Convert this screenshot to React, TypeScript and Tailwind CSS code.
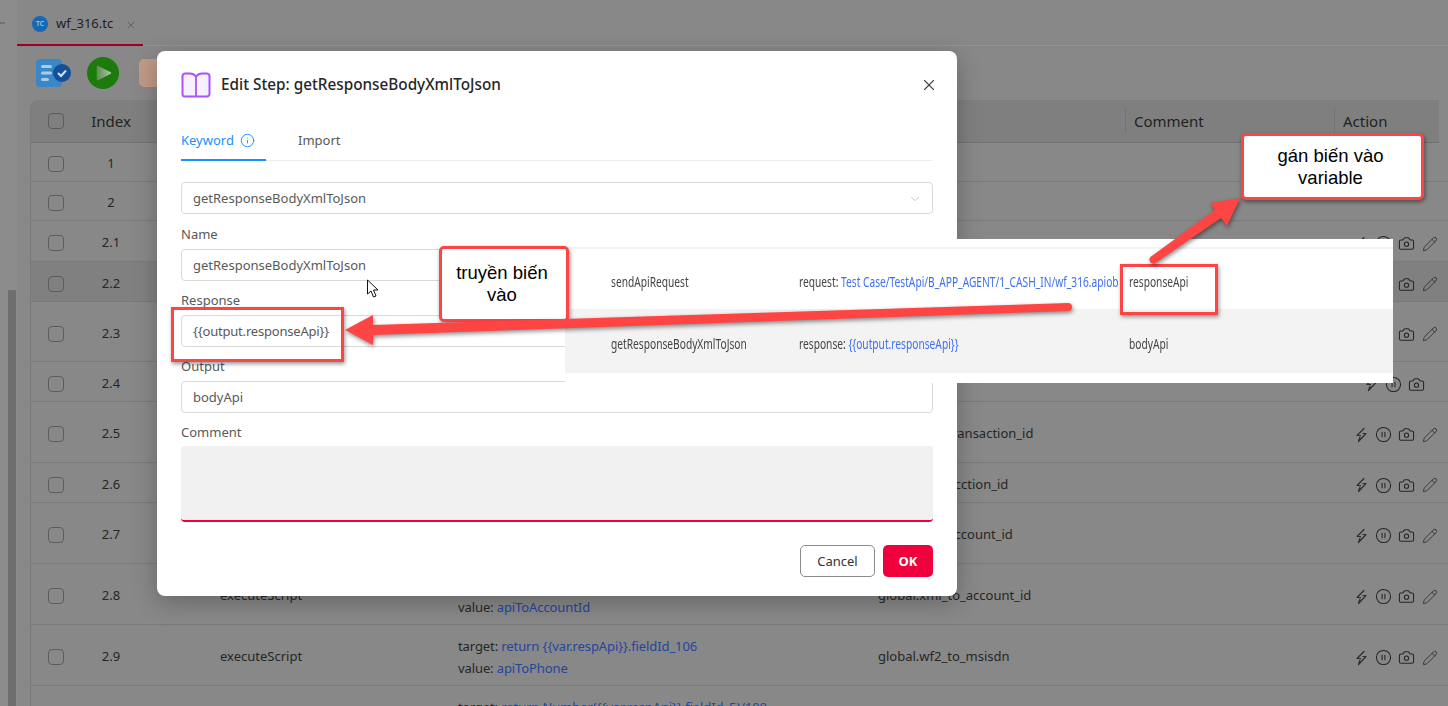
import React from 'react';
import { CirclePause, Camera, Pencil, X, ChevronDown, Info } from 'lucide-react';

const gridCols = 'grid grid-cols-[51px_58px_318px_420px_256px_209px_1fr] items-center';

interface RowData {
  index: string;
  h: string;
  keyword?: string;
  lines?: [string, string][];
  output?: string;
  actions?: 'full' | 'noedit' | 'none';
  hover?: boolean;
}

const rows: RowData[] = [
  { index: '1', h: 'h-[39px]', actions: 'none' },
  { index: '2', h: 'h-[39px]', actions: 'none' },
  { index: '2.1', h: 'h-[41px]', actions: 'full' },
  { index: '2.2', h: 'h-[40px]', actions: 'full', hover: true },
  { index: '2.3', h: 'h-[60px]', actions: 'full' },
  { index: '2.4', h: 'h-[40px]', actions: 'noedit' },
  { index: '2.5', h: 'h-[61px]', actions: 'full', output: 'global.xml_transaction_id' },
  { index: '2.6', h: 'h-[40px]', actions: 'full', output: 'global.xml_acction_id' },
  { index: '2.7', h: 'h-[61px]', actions: 'full', output: 'global.wf2_account_id' },
  {
    index: '2.8',
    h: 'h-[61px]',
    actions: 'full',
    keyword: 'executeScript',
    output: 'global.xml_to_account_id',
    lines: [['target: ', 'return {{var.respApi}}.fieldId_102'], ['value: ', 'apiToAccountId']],
  },
  {
    index: '2.9',
    h: 'h-[61px]',
    actions: 'full',
    keyword: 'executeScript',
    output: 'global.wf2_to_msisdn',
    lines: [['target: ', 'return {{var.respApi}}.fieldId_106'], ['value: ', 'apiToPhone']],
  },
  {
    index: '2.10',
    h: 'h-[61px]',
    actions: 'none',
    keyword: 'executeScript',
    lines: [['target: ', 'return Number({{var.respApi}}.fieldId_5)/100'], ['value: ', 'apiAmount']],
  },
];

function Checkbox() {
  return <span className="block w-[16px] h-[16px] rounded-[4px] border border-[#5c5c5c] ml-[17px]" />;
}

function Bolt() {
  return (
    <svg width="16" height="16" viewBox="0 0 16 16" fill="none" stroke="#2e2e2e" strokeWidth="1.2" strokeLinejoin="round" strokeLinecap="round" className="shrink-0">
      <path d="M11 1.500 L4 8.500 H7.500" />
      <path d="M10 6.500 H13 L5.500 14.500 L7 10" />
    </svg>
  );
}

function Actions({ kind }: { kind: RowData['actions'] }) {
  if (kind === 'none') return null;
  return (
    <div className={kind === 'noedit' ? 'flex items-center pl-[20px] pt-[1px]' : 'flex items-center pl-[10px] pt-[1px]'}>
      <Bolt />
      <CirclePause className="ml-[6px] w-[17px] h-[17px] text-[#262626] shrink-0" strokeWidth={1.5} />
      <Camera className="ml-[6px] w-[17px] h-[17px] text-[#262626] shrink-0" strokeWidth={1.5} />
      {kind === 'full' && <Pencil className="ml-[7px] w-[16px] h-[16px] text-[#333] shrink-0" strokeWidth={1.4} />}
    </div>
  );
}

function TableRow({ row }: { row: RowData }) {
  return (
    <div className={`${gridCols} ${row.h} pt-[4px] border-b border-[#7a7a7a] text-[13px] text-[#262626] ${row.hover ? 'bg-[#808080]' : ''}`}>
      <div><Checkbox /></div>
      <div className="text-center">{row.index}</div>
      <div className="pl-[80px]">{row.keyword}</div>
      <div className="flex flex-col gap-[3px] leading-[19px] tracking-[-0.1px]">
        {row.lines?.map(([k, v]) => (
          <div key={k} className="whitespace-nowrap">
            {k}
            <span className="text-[#24459e]">{v}</span>
          </div>
        ))}
      </div>
      <div className="whitespace-nowrap">{row.output}</div>
      <div />
      <Actions kind={row.actions} />
    </div>
  );
}

function Field({ label, value, tight }: { label: string; value: string; tight?: boolean }) {
  return (
    <div className="flex flex-col">
      <label className="text-[13px] leading-[18px] text-[#595959] mb-[6px] -mt-[1px] h-[18px]">{label}</label>
      <div className={`h-[32px] border border-[#d9d9d9] rounded-[4px] pl-[11px] pt-[2px] flex items-center text-[13px] text-[#595959] ${tight ? 'tracking-[-0.2px]' : ''}`}>{value}</div>
    </div>
  );
}

function EditModal() {
  return (
    <div className="absolute left-[157px] top-[51px] w-[800px] h-[545px] bg-white rounded-[8px] shadow-[0_6px_24px_rgba(0,0,0,0.25)] px-[24px] flex flex-col z-10">
      <div className="flex items-center h-[66px] pt-[1px] gap-[10px] shrink-0">
        <svg width="30" height="26" viewBox="0 0 30 26" fill="none" className="shrink-0">
          <path d="M15 4.500C13.500 2.500 11.500 1.500 9 1.500H4A2.500 2.500 0 0 0 1.500 4v18A2.500 2.500 0 0 0 4 24.500h22a2.500 2.500 0 0 0 2.500-2.500V4A2.500 2.500 0 0 0 26 1.500h-5c-2.500 0-4.500 1-6 3Z" fill="#f6f0ff" stroke="#a855f7" strokeWidth="2" strokeLinejoin="round" />
          <path d="M15 4.500V24.500" stroke="#a855f7" strokeWidth="1.800" />
        </svg>
        <div className="text-[15.3px] font-medium text-[#262626] whitespace-nowrap">Edit Step: getResponseBodyXmlToJson</div>
        <X className="ml-auto mr-[-5px] w-[18px] h-[18px] text-[#444]" strokeWidth={1.5} />
      </div>
      <div className="flex h-[44px] border-b border-[#eeeeee] text-[13px] shrink-0">
        <div className="w-[85px] border-b-2 border-[#1890ff] h-[44px] pt-[5px] flex items-center gap-[6px] text-[#1890ff]">
          Keyword <Info className="w-[15px] h-[15px]" strokeWidth={1.5} />
        </div>
        <div className="ml-[32px] flex items-center h-[44px] pt-[4px] text-[#595959]">Import</div>
      </div>
      <div className="mt-[21px] h-[32px] border border-[#d9d9d9] rounded-[4px] pl-[11px] pr-[10px] pt-[2px] flex items-center justify-between text-[13px] text-[#595959] shrink-0">
        getResponseBodyXmlToJson
        <ChevronDown className="w-[14px] h-[14px] text-[#bfbfbf]" strokeWidth={1.5} />
      </div>
      <div className="mt-[12px] flex flex-col gap-[11px] shrink-0">
        <Field label="Name" value="getResponseBodyXmlToJson" />
        <Field label="Response" value="{{output.responseApi}}" tight />
        <Field label="Output" value="bodyApi" />
      </div>
      <div className="mt-[10px] shrink-0">
        <label className="block text-[13px] leading-[18px] text-[#595959] mb-[5px]">Comment</label>
        <div className="h-[76px] bg-[#f0f0f0] rounded-[4px] border-b-2 border-[#f0003c]" />
      </div>
      <div className="mt-[23px] flex justify-end gap-[8px] shrink-0">
        <button className="w-[75px] h-[32px] pt-[1px] rounded-[5px] border border-[#8c8c8c] text-[13px] text-[#333]">Cancel</button>
        <button className="w-[50px] h-[32px] pt-[1px] rounded-[5px] bg-[#f0003c] text-[13px] font-bold text-white">OK</button>
      </div>
    </div>
  );
}

// pasted screenshot of the two steps, squeezed horizontally like in the original capture
function PastedSteps() {
  const squeeze = 'scale-x-[0.68] origin-left whitespace-nowrap';
  return (
    <div className="absolute left-[565px] top-[239px] w-[828px] h-[144px] bg-white pt-[8px] z-20 text-[15px] text-[#444]">
      <div className="h-[62px] pt-[4px] border-t-2 border-[#f3f3f3] flex items-center">
        <div className="w-[234px] pl-[46px]"><div className={squeeze}>sendApiRequest</div></div>
        <div className="w-[319px] overflow-hidden whitespace-nowrap">
          <div className={squeeze}>
            request: <span className="text-[#3f6fee]">Test Case/TestApi/B_APP_AGENT/1_CASH_IN/wf_316.apiobject</span>
          </div>
        </div>
        <div className="ml-[11px]"><div className={squeeze}>responseApi</div></div>
      </div>
      <div className="h-[64px] pt-[5px] bg-[#f3f3f3] flex items-center">
        <div className="w-[234px] pl-[46px]"><div className={squeeze}>getResponseBodyXmlToJson</div></div>
        <div className="w-[319px]">
          <div className={squeeze}>
            response: <span className="text-[#3f6fee]">{'{{output.responseApi}}'}</span>
          </div>
        </div>
        <div className="ml-[11px]"><div className={squeeze}>bodyApi</div></div>
      </div>
    </div>
  );
}

function Callout({ className, lines }: { className: string; lines: string[] }) {
  return (
    <div className={`absolute z-30 bg-white border-[3px] border-[#ff4444] rounded-[5px] pr-[4px] shadow-[1px_2px_4px_rgba(0,0,0,0.45)] flex flex-col items-center justify-center font-['Liberation_Sans',sans-serif] text-[18.5px] leading-[22px] text-black ${className}`}>
      {lines.map(l => <div key={l}>{l}</div>)}
    </div>
  );
}

function Arrows() {
  return (
    <svg width="1448" height="706" className="absolute left-0 top-0 z-40 pointer-events-none">
      <g fill="#ff4444" style={{ filter: 'drop-shadow(1px 2px 2px rgba(0,0,0,0.45))' }}>
        <path d="M345 330 L373 315 L373 325 L1068 303 A4 4 0 0 1 1068 311 L373 335 L373 345 Z" />
        <path d="M1240 198 L1210 203 L1215 210 L1150.700 256.800 A4 4 0 0 0 1155.300 263.200 L1221 218 L1227 226 Z" />
      </g>
      {/* mouse pointer */}
      <path d="M367.500 280 V294 L371 291 L373.500 297 L376 296 L373.500 290 L378 290 Z" fill="#fff" stroke="#111" strokeWidth="1" />
    </svg>
  );
}

export default function App() {
  return (
    <div className="relative w-[1448px] h-[706px] overflow-hidden flex bg-[#888888] font-['Noto_Sans',sans-serif]">
      {/* left gutter with page scrollbar */}
      <div className="w-[17px] shrink-0 bg-[#8c8c8c] flex flex-col">
        <div className="h-[2px] w-[5px] bg-[#707070] mt-[22px]" />
        <div className="mt-[266px] ml-[8px] w-[8px] flex-1 bg-[#6e6e6e]" />
      </div>

      <div className="flex-1 min-w-0 flex flex-col">
        {/* tab bar */}
        <div className="h-[46px] shrink-0 flex border-b border-[#939393]">
          <div className="w-[126px] h-[46px] pt-[4px] border-b-2 border-[#a00026] flex items-center pl-[15px]">
            <span className="w-[16px] h-[16px] rounded-full bg-[#1668b5] text-[#cfe0f0] text-[7px] flex items-center justify-center">TC</span>
            <span className="ml-[8px] text-[13px] text-[#1f1f1f]">wf_316.tc</span>
            <X className="ml-[12px] mt-[2px] w-[12px] h-[12px] text-[#555]" strokeWidth={1.5} />
          </div>
        </div>

        {/* toolbar */}
        <div className="h-[54px] shrink-0 flex items-center gap-[16px] pl-[19px]">
          <svg width="35" height="28" viewBox="0 0 35 28">
            <rect x="0" y="0" width="26" height="28" rx="4" fill="#3a87c8" />
            <rect x="5" y="6" width="11" height="3" rx="1.500" fill="#a9cde6" />
            <rect x="5" y="12.500" width="11" height="3" rx="1.500" fill="#a9cde6" />
            <rect x="5" y="19" width="8" height="3" rx="1.500" fill="#a9cde6" />
            <circle cx="26" cy="14" r="9" fill="#12509a" />
            <path d="M22 14l3 3 5-5.500" fill="none" stroke="#d5e3ef" strokeWidth="2" />
          </svg>
          <svg width="32" height="32" viewBox="0 0 32 32">
            <defs>
              <linearGradient id="play" x1="0" x2="1" y1="0" y2="0">
                <stop offset="0" stopColor="#5f8f58" />
                <stop offset="1" stopColor="#a5c79d" />
              </linearGradient>
            </defs>
            <circle cx="16" cy="16" r="16" fill="#1d7a0c" />
            <path d="M10.500 9.500 L23.500 16 L10.500 22.500 Z" fill="url(#play)" stroke="url(#play)" strokeWidth="1.500" strokeLinejoin="round" />
          </svg>
          <div className="w-[40px] h-[28px] rounded-[5px] bg-[#c09a85] ml-[4px]" />
        </div>

        {/* steps table */}
        <div className="pl-[13px]">
          <div className="rounded-tl-[8px] overflow-hidden border-l border-[#7a7a7a]">
            <div className={`${gridCols} h-[43px] w-[1408px] bg-[#7f7f7f] border-b border-[#737373] text-[15px] text-[#1f1f1f]`}>
              <div><Checkbox /></div>
              <div className="text-center">Index</div>
              <div className="pl-[80px]">Keyword</div>
              <div>Parameters</div>
              <div>Output</div>
              <div className="relative h-full flex items-center before:absolute before:-left-[9px] before:top-[8px] before:bottom-[8px] before:w-px before:bg-[#737373]">Comment</div>
              <div className="relative h-full flex items-center before:absolute before:-left-[9px] before:top-[8px] before:bottom-[8px] before:w-px before:bg-[#737373]">Action</div>
            </div>
            {rows.map(r => <TableRow key={r.index} row={r} />)}
          </div>
        </div>
      </div>

      <EditModal />
      <PastedSteps />

      {/* red annotation frames */}
      <div className="absolute z-30 left-[171px] top-[307px] w-[173px] h-[55px] border-[3px] border-[#ff4444] shadow-[1px_2px_4px_rgba(0,0,0,0.4)]" />
      <div className="absolute z-30 left-[1120px] top-[264px] w-[98px] h-[51px] border-[3px] border-[#ff4444] shadow-[1px_2px_4px_rgba(0,0,0,0.4)]" />
      <Callout className="left-[439px] top-[246px] w-[130px] h-[76px]" lines={['truyền biến', 'vào']} />
      <Callout className="left-[1241px] top-[133px] w-[183px] h-[67px]" lines={['gán biến vào', 'variable']} />
      <Arrows />
    </div>
  );
}
